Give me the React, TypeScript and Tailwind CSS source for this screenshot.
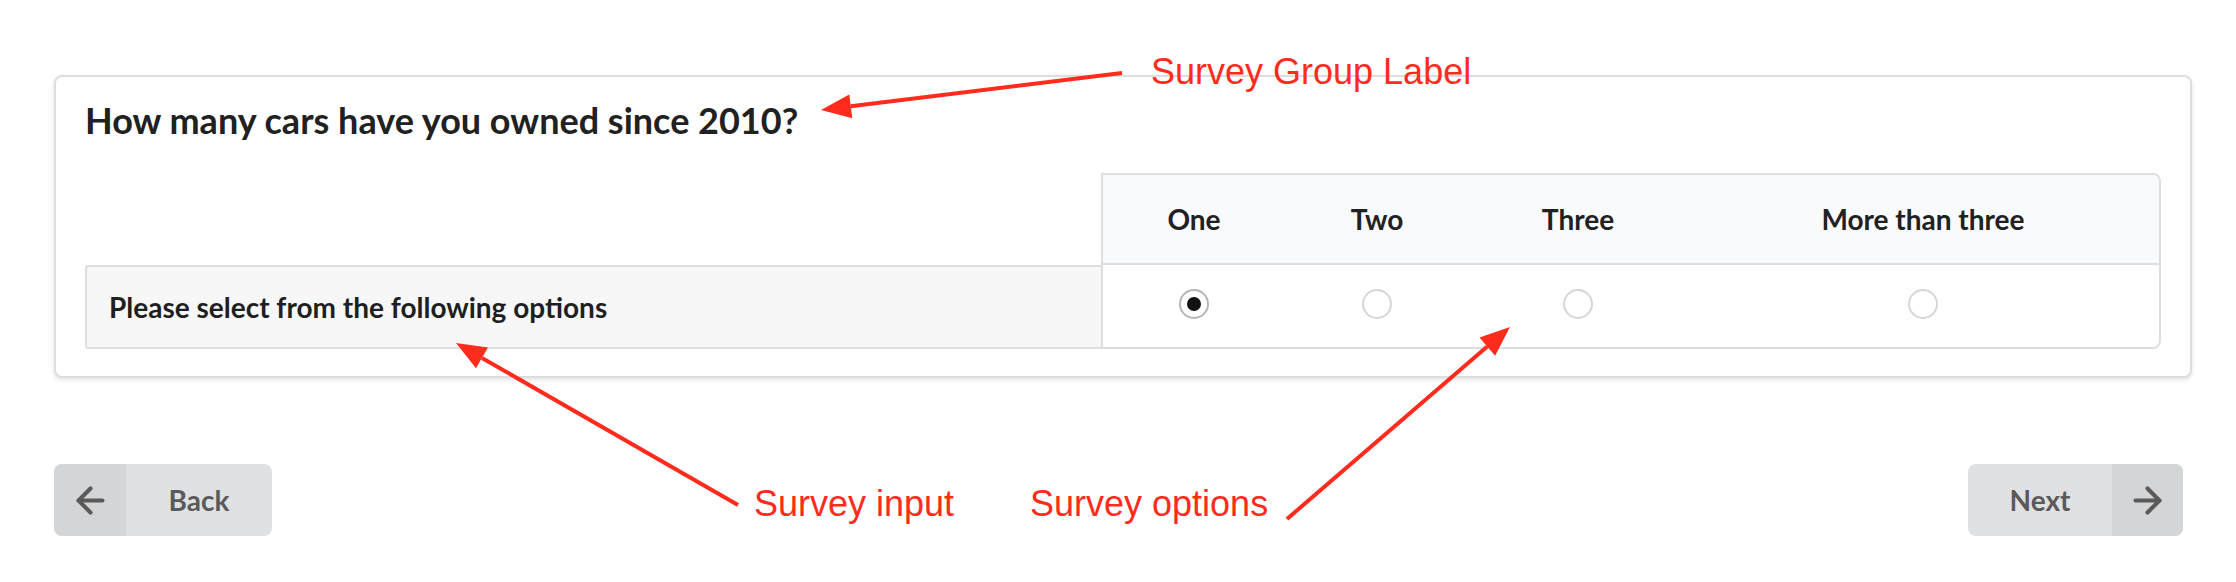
import { ArrowLeft, ArrowRight } from 'lucide-react'

const options = [
  { label: 'One', width: 'w-[182px]', checked: true },
  { label: 'Two', width: 'w-[184px]', checked: false },
  { label: 'Three', width: 'w-[218px]', checked: false },
  { label: 'More than three', width: 'w-[472px]', checked: false },
]

function Radio({ checked }: { checked: boolean }) {
  return (
    <span
      className={
        checked
          ? 'flex h-[30px] w-[30px] items-center justify-center rounded-full border-2 border-[#b5b5b5] bg-white'
          : 'flex h-[30px] w-[30px] items-center justify-center rounded-full border-2 border-[#d6d6d6] bg-white'
      }
    >
      {checked && <span className="h-[14px] w-[14px] rounded-full bg-[#111111]" />}
    </span>
  )
}

// red callouts drawn over the form
function Annotations() {
  const red = '#ff2b1c'
  return (
    <>
      <svg className="pointer-events-none absolute inset-0" width="2236" height="582" viewBox="0 0 2236 582">
        <line x1="1122" y1="73" x2="850.8" y2="106.3" stroke={red} strokeWidth="4" />
        <polygon points="821,110 849.3,94.4 852.3,118.2" fill={red} />

        <line x1="738" y1="505" x2="482" y2="357.9" stroke={red} strokeWidth="4" />
        <polygon points="456,343 488,347.5 476,368.3" fill={red} />

        <line x1="1287" y1="519" x2="1487.3" y2="346.6" stroke={red} strokeWidth="4" />
        <polygon points="1510,327 1495.1,355.7 1479.5,337.5" fill={red} />
      </svg>
      <span className="absolute left-[1151px] top-[54px] font-['Liberation_Sans',Arial,sans-serif] text-[36px] leading-[36px] text-[#ff2b1c]">
        Survey Group Label
      </span>
      <span className="absolute left-[754px] top-[486px] font-['Liberation_Sans',Arial,sans-serif] text-[36px] leading-[36px] text-[#ff2b1c]">
        Survey input
      </span>
      <span className="absolute left-[1030px] top-[486px] font-['Liberation_Sans',Arial,sans-serif] text-[36px] leading-[36px] text-[#ff2b1c]">
        Survey options
      </span>
    </>
  )
}

export default function App() {
  return (
    <div className="relative h-[582px] w-[2236px] overflow-hidden bg-white pt-[75px] font-[Lato,sans-serif]">
      {/* Survey group */}
      <div className="ml-[54px] w-[2138px] rounded-[8px] border-2 border-[#dedede] bg-white px-[29px] pb-[27px] pt-[20px] shadow-[0_2px_4px_0_rgba(34,36,38,0.12)]">
        <h3 className="text-[36px] font-bold leading-[46px] text-[#212121]">
          How many cars have you owned since 2010?
        </h3>

        <div className="mt-[30px] flex">
          <div className="flex w-[1016px] flex-col">
            <div className="h-[92px]" />
            <div className="flex h-[84px] items-center rounded-l-[3px] border-2 border-r-0 border-[#dedede] bg-[#f7f7f7] pl-[22px] text-[28px] font-bold text-[#1f1f1f]">
              Please select from the following options
            </div>
          </div>

          <div className="flex-1 overflow-hidden rounded-r-[8px] border-2 border-[#dedede]">
            <div className="flex h-[90px] border-b-2 border-[#dedede] bg-[#f9fafb]">
              {options.map((o) => (
                <div key={o.label} className={`${o.width} flex items-center justify-center text-[28px] font-bold text-[#212121]`}>
                  {o.label}
                </div>
              ))}
            </div>
            <div className="flex h-[82px]">
              {options.map((o) => (
                <div key={o.label} className={`${o.width} flex items-center justify-center pb-[4px]`}>
                  <Radio checked={o.checked} />
                </div>
              ))}
            </div>
          </div>
        </div>
      </div>

      {/* Navigation */}
      <div className="ml-[54px] mt-[86px] flex w-[2129px] justify-between">
        <button className="flex h-[72px] w-[218px] overflow-hidden rounded-[8px] bg-[#e0e1e2] text-[28px] font-bold text-[#5a5a5a]">
          <span className="flex h-full w-[72px] items-center justify-center bg-[#d4d5d6]">
            <ArrowLeft size={41} strokeWidth={2.4} />
          </span>
          <span className="flex h-full flex-1 items-center justify-center">Back</span>
        </button>
        <button className="flex h-[72px] w-[215px] overflow-hidden rounded-[8px] bg-[#e0e1e2] text-[28px] font-bold text-[#5a5a5a]">
          <span className="flex h-full flex-1 items-center justify-center">Next</span>
          <span className="flex h-full w-[71px] items-center justify-center bg-[#d4d5d6]">
            <ArrowRight size={41} strokeWidth={2.4} />
          </span>
        </button>
      </div>

      <Annotations />
    </div>
  )
}
